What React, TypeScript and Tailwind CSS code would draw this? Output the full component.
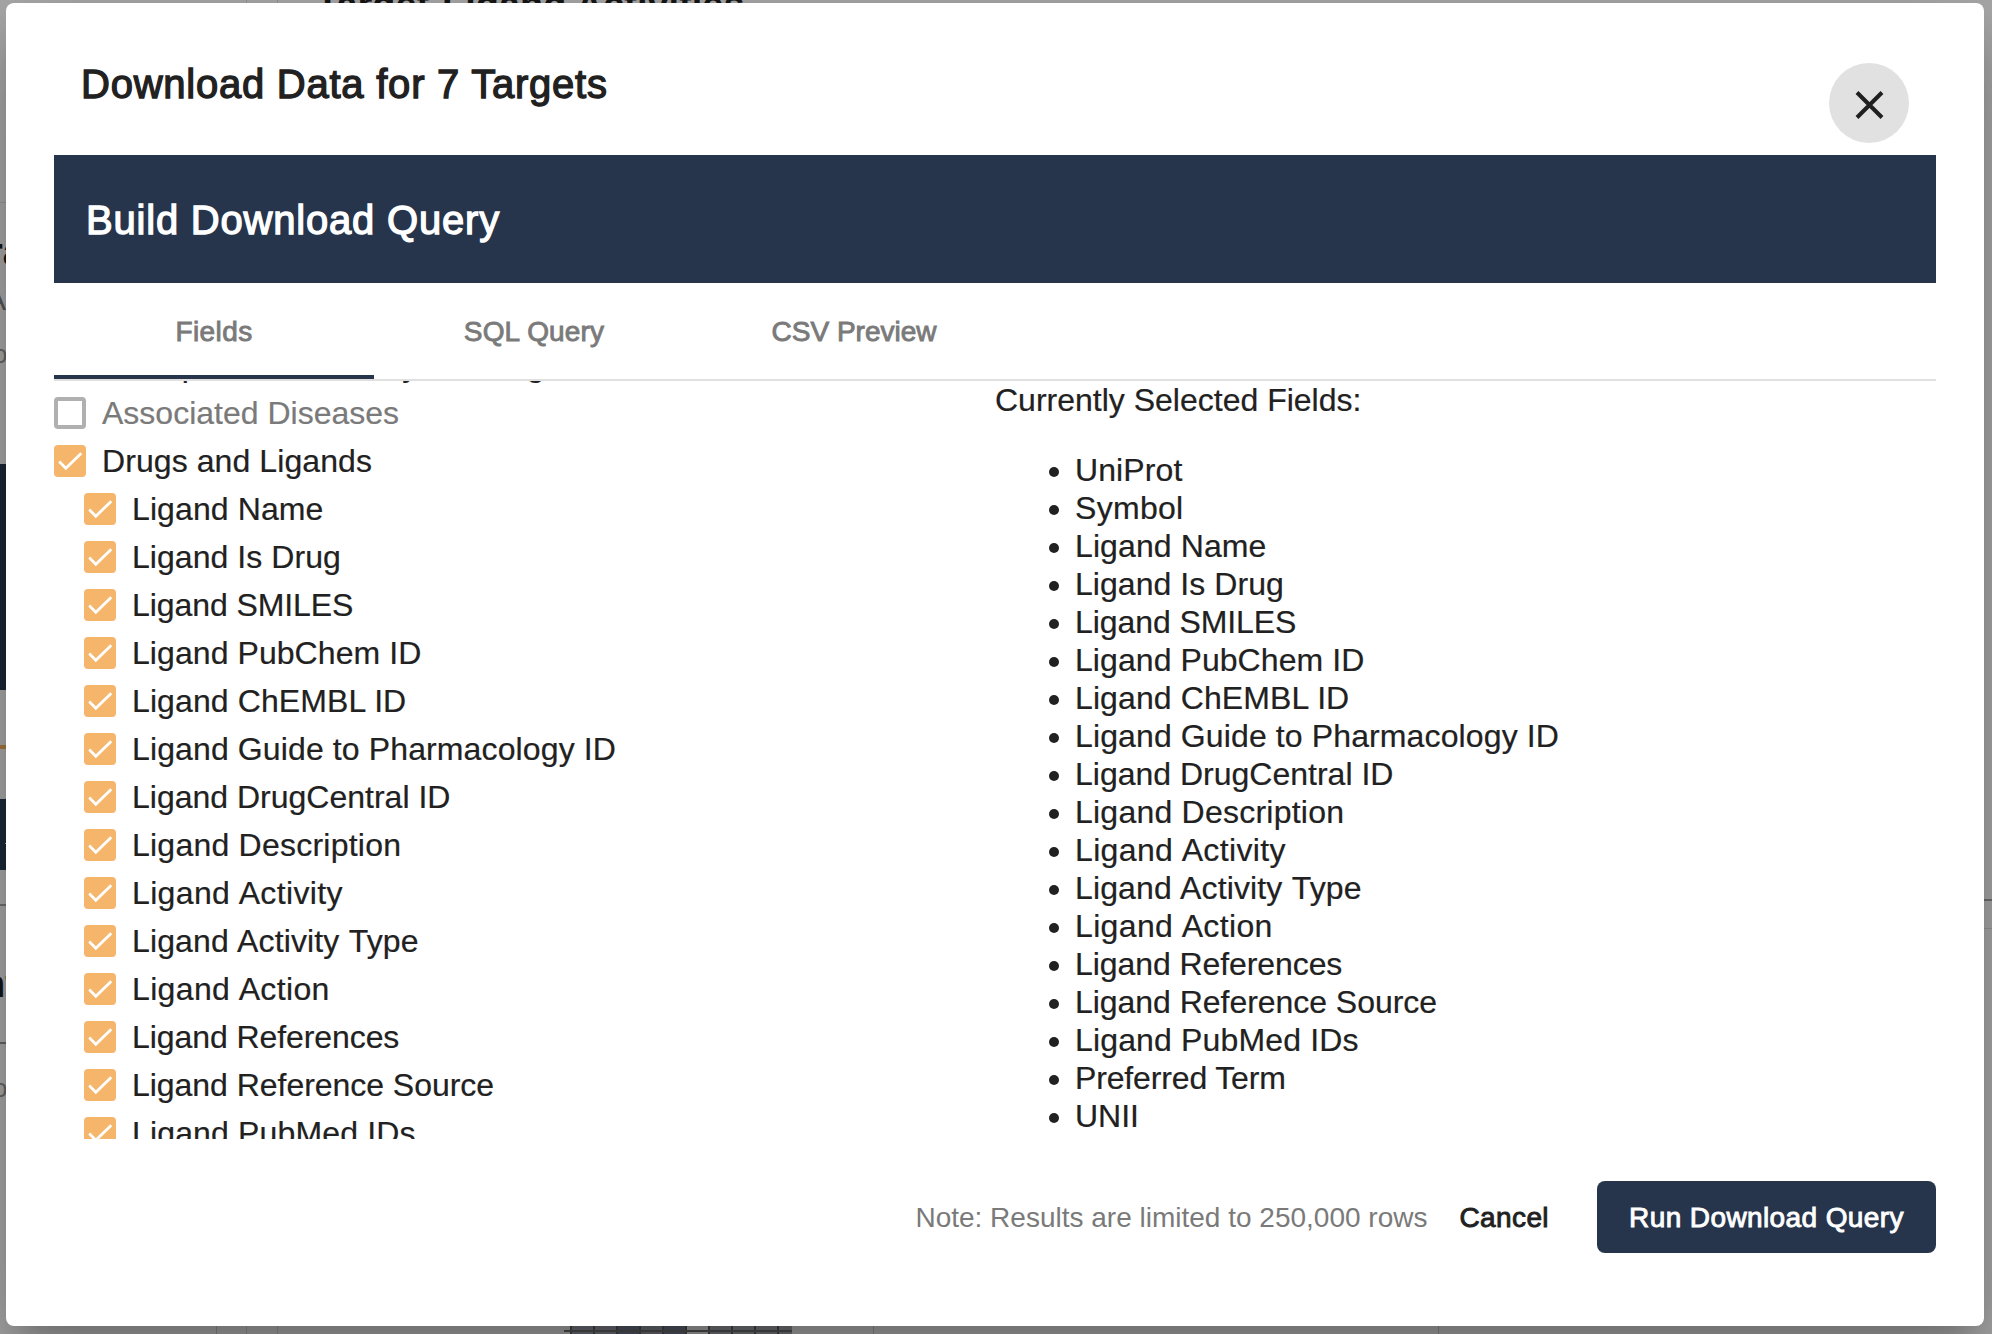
import React from "react";

const fields = [
  "Ligand Name",
  "Ligand Is Drug",
  "Ligand SMILES",
  "Ligand PubChem ID",
  "Ligand ChEMBL ID",
  "Ligand Guide to Pharmacology ID",
  "Ligand DrugCentral ID",
  "Ligand Description",
  "Ligand Activity",
  "Ligand Activity Type",
  "Ligand Action",
  "Ligand References",
  "Ligand Reference Source",
  "Ligand PubMed IDs",
];
const selected = ["UniProt", "Symbol", ...fields, "Preferred Term", "UNII"];

const spacing: Record<string, string> = {
  "Drugs and Ligands": "tracking-[0.08px]",
  UniProt: "tracking-[0.1px]",
  Symbol: "tracking-[0.3px]",
  "Ligand Name": "tracking-[0.1px]",
  "Ligand Is Drug": "tracking-[0.05px]",
  "Ligand SMILES": "tracking-[-0.08px]",
  "Ligand PubChem ID": "tracking-[0.07px]",
  "Ligand ChEMBL ID": "tracking-[0.1px]",
  "Ligand Guide to Pharmacology ID": "tracking-[0.12px]",
  "Ligand Description": "tracking-[0.23px]",
  "Ligand Activity": "[word-spacing:1px] tracking-[0.35px]",
  "Ligand Activity Type": "[word-spacing:1px] tracking-[0.12px]",
  "Ligand Action": "[word-spacing:1px] tracking-[0.35px]",
  "Ligand References": "tracking-[-0.08px]",
  "Ligand Reference Source": "tracking-[-0.04px]",
  "Ligand PubMed IDs": "tracking-[0.15px]",
  "Preferred Term": "tracking-[-0.15px]",
};

const cells = [
  "bg-[#6c7078]",
  "bg-[#6c7078]",
  "bg-[#4f5663]",
  "bg-[#686c74]",
  "bg-[#4f5663]",
  "bg-[#a5a5a5]",
  "bg-[#74767a]",
  "bg-[#74767a]",
  "bg-[#74767a]",
];

function Box({ checked }: { checked?: boolean }) {
  if (!checked) return <span className="size-8 shrink-0 rounded-[4px] border-4 border-[#b0b0b0]" />;
  return (
    <span className="size-8 shrink-0 rounded-[4px] bg-[#f5b56b]">
      <svg viewBox="0 0 32 32" className="size-8" fill="none" stroke="#fff" strokeWidth="2.8">
        <path d="M5.2 16.6 11.8 23.2 27.3 8.2" />
      </svg>
    </span>
  );
}

function Row({ label, checked, nested, muted }: { label: string; checked?: boolean; nested?: boolean; muted?: boolean }) {
  return (
    <div className={`flex h-12 shrink-0 items-center gap-4 whitespace-nowrap ${nested ? "pl-[30px]" : ""} ${muted ? "text-[#7a7a7a]" : ""}`}>
      <Box checked={checked} />
      <span className={spacing[label] ?? ""}>{label}</span>
    </div>
  );
}

// Page content that shows around the edges of the dialog
function Backdrop() {
  return (
    <div className="absolute inset-0 overflow-hidden bg-[#aaa]" aria-hidden="true">
      <div className="absolute top-0 left-[246px] h-full w-px bg-[#969696]" />
      <div className="absolute top-0 left-[277px] h-full w-px bg-[#969696]" />
      <div className="absolute top-[-23px] left-[316px] text-[38px] leading-[56px] font-bold whitespace-nowrap text-[#161616]">Target-Ligand Activities</div>
      <div className="absolute top-[202px] left-0 h-px w-2 bg-[#999]" />
      <div className="absolute top-[230px] left-[-12px] text-[38px] leading-[44px] font-bold text-[#161616]">ra</div>
      <div className="absolute top-[282px] left-[-14px] text-[30px] leading-[36px] text-[#555]">A</div>
      <div className="absolute top-[338px] left-[-7px] text-[26px] leading-[32px] text-[#666]">o</div>
      <div className="absolute top-[464px] left-0 h-[226px] w-2 bg-[#1b2636]" />
      <div className="absolute top-[745px] left-0 h-1 w-2 bg-[#a8793f]" />
      <div className="absolute top-[799px] left-0 h-[71px] w-2 bg-[#1b2a38]" />
      <div className="absolute top-[843px] left-[5px] h-px w-1 bg-[#aaa]" />
      <div className="absolute top-[904px] left-0 h-0.5 w-2 bg-[#707070]" />
      <div className="absolute top-[962px] left-[-18px] text-[38px] leading-[44px] font-bold text-[#161616]">nt</div>
      <div className="absolute top-[1042px] left-0 h-0.5 w-2 bg-[#666]" />
      <div className="absolute top-[1072px] left-[-7px] text-[26px] leading-[32px] text-[#666]">o</div>
      <div className="absolute top-[899px] right-0 h-0.5 w-2 bg-[#707070]" />
      <div className="absolute top-[928px] right-0 h-px w-2 bg-[#999]" />
      <div className="absolute bottom-0 left-[216px] h-2 w-px bg-[#8d8d8d]" />
      <div className="absolute bottom-0 left-[873px] h-2 w-px bg-[#8d8d8d]" />
      <div className="absolute bottom-0 left-[1438px] h-2 w-px bg-[#8d8d8d]" />
      <div className="absolute bottom-0 left-[564px] flex h-2 w-[228px] overflow-hidden bg-[#aaa] pl-1.5">
        {cells.map((c, i) => (
          <div key={i} className={`h-2 w-[23px] shrink-0 border-l-2 border-[#444] ${c}`} />
        ))}
        <div className="h-2 flex-1 border-l-2 border-[#444] bg-[#74767a]" />
      </div>
      <div className="absolute bottom-0.5 left-[564px] h-0.5 w-[228px] bg-[#505050]" />
    </div>
  );
}

export default function App() {
  return (
    <div className="relative h-[1334px] w-[1992px] overflow-hidden font-['Liberation_Sans',sans-serif] text-[#212121]">
      <Backdrop />
      <main className="absolute top-[3px] left-[6px] flex h-[1323px] w-[1978px] flex-col rounded-lg bg-white pr-12 pl-12 shadow-[0_22px_30px_-14px_rgba(0,0,0,0.2),0_48px_76px_6px_rgba(0,0,0,0.14),0_18px_92px_16px_rgba(0,0,0,0.12)]">
        <header className="flex h-[152px] shrink-0 items-start justify-between pr-[27px] pl-[27px]">
          <h1 className="mt-[57px] text-[40px] leading-12 tracking-[0.76px] [-webkit-text-stroke:1.3px_currentColor]">Download Data for 7 Targets</h1>
          <button className="mt-[60px] flex size-20 items-center justify-center rounded-full bg-[#e1e1e1]">
            <svg viewBox="0 0 80 80" className="size-20" stroke="#1f1f1f" strokeWidth="4" fill="none">
              <path d="M28 29.5 53 54.5M53 29.5 28 54.5" />
            </svg>
          </button>
        </header>
        <div className="flex h-32 shrink-0 items-center bg-[#27354c] pt-0.5 pl-8 text-[40px] tracking-[0.8px] text-white [-webkit-text-stroke:1.3px_currentColor]">
          <h2>Build Download Query</h2>
        </div>
        <nav className="flex h-[98px] shrink-0 border-b-2 border-[#e0e0e0] text-[28px] text-[#7a7a7a] [-webkit-text-stroke:0.9px_currentColor]">
          <div className="flex w-80 items-center justify-center border-b-4 border-[#27354c] pt-1.5 tracking-[0.4px]">Fields</div>
          <div className="flex w-80 items-center justify-center border-b-4 border-transparent pt-1.5 tracking-[0.15px]">SQL Query</div>
          <div className="flex w-80 items-center justify-center border-b-4 border-transparent pt-1.5">CSV Preview</div>
        </nav>
        <section className="grid h-[758px] shrink-0 grid-cols-2 overflow-hidden text-[32px] [-webkit-text-stroke:0.2px_currentColor]">
          <div className="flex flex-col overflow-hidden">
            <div className="-mt-10 flex flex-col">
              <Row label="Proportion Similarity Ranking" nested />
              <Row label="Associated Diseases" muted />
              <Row label="Drugs and Ligands" checked />
              {fields.map((f) => (
                <Row key={f} label={f} checked nested />
              ))}
            </div>
          </div>
          <div>
            <p className="leading-[38px]">Currently Selected Fields:</p>
            <ul className="mt-8 list-disc pl-20 leading-[38px]">
              {selected.map((f) => (
                <li key={f} className={spacing[f] ?? ""}>{f}</li>
              ))}
            </ul>
          </div>
        </section>
        <footer className="mt-[42px] flex h-[72px] shrink-0 items-center justify-end text-[28px]">
          <span className="pt-0.5 text-[#7a7a7a]">Note: Results are limited to 250,000 rows</span>
          <button className="ml-8 pt-0.5 tracking-[0.4px] [-webkit-text-stroke:0.9px_currentColor]">Cancel</button>
          <button className="ml-12 h-[72px] w-[339px] rounded-lg bg-[#27354c] pt-0.5 tracking-[0.4px] text-white [-webkit-text-stroke:0.9px_currentColor]">Run Download Query</button>
        </footer>
      </main>
    </div>
  );
}
